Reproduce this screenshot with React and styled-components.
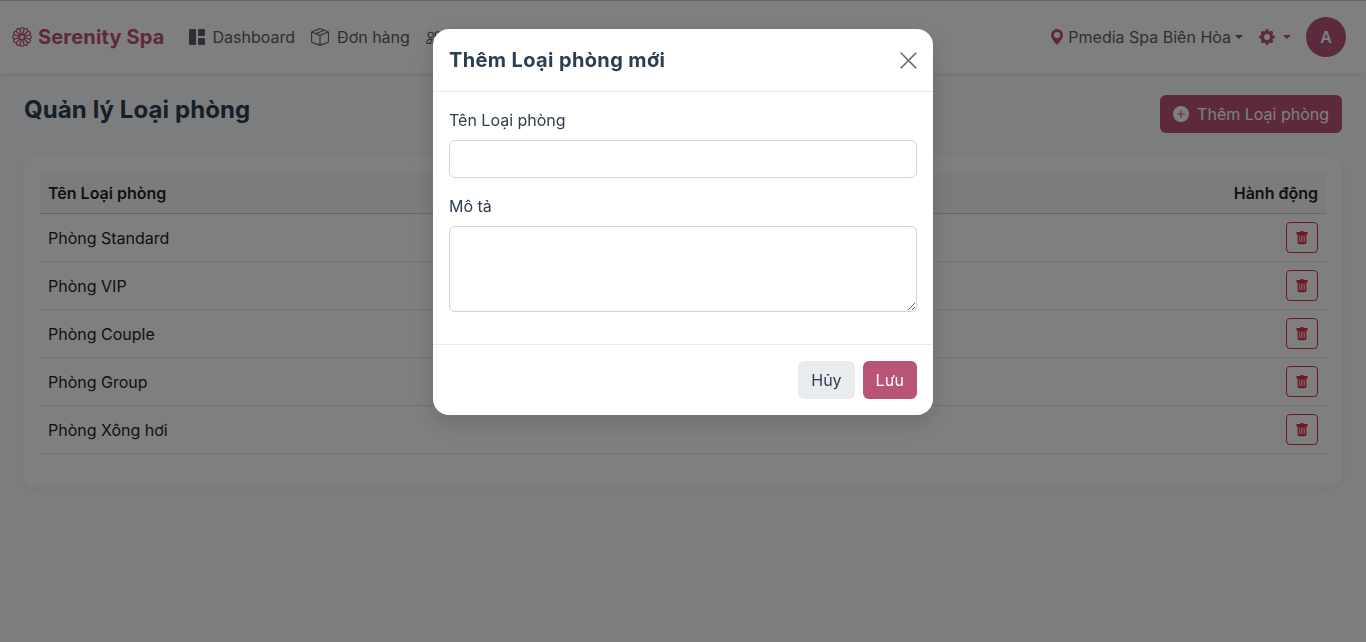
import React from 'react';
import styled, { createGlobalStyle } from 'styled-components';
import { BsFlower1, BsGrid1X2Fill, BsBoxSeam, BsPeople, BsCalendarCheck, BsGeoAltFill, BsGearFill, BsPlusCircleFill, BsTrashFill, BsXLg, BsGrid, BsBarChart } from 'react-icons/bs';

const Global = createGlobalStyle`
  html, body { margin: 0; padding: 0; height: 100%; overflow: hidden; }
  body { font-family: Inter, "Noto Sans", sans-serif; font-size: 16px; line-height: 1.5; color: #212529; background: #f8faff; }
  * { box-sizing: border-box; }
`;
const heading = `"Inter", "Noto Sans", sans-serif`;
const pink = '#b85478';

const Page = styled.div`min-height: 642px;`;
const Nav = styled.nav`
  height: 73px; background: #fff; border-top: 1px solid #ccc;
  box-shadow: 0 2px 4px rgba(0,0,0,.06);
  display: flex; align-items: center; padding: 0 20px 0 12px;
`;
const Brand = styled.div`
  display: flex; align-items: center; gap: 6px; color: ${pink};
  font-family: ${heading}; font-weight: 700; font-size: 20px; letter-spacing: 0.17px; margin-right: 24px; white-space: nowrap;
`;
const NavList = styled.div`display: flex; align-items: center; gap: 16px; flex: 1;`;
const NavItem = styled.a`
  display: flex; align-items: center; gap: 8px; white-space: nowrap; color: #5a6068; font-size: 16px;
  svg { flex: none; }
`;
const Caret = styled.span`
  display: block; flex: none; margin-left: ${p => p.$gap || 4}px; width: 0; height: 0;
  border-top: 4.2px solid currentColor;
  border-left: 4.2px solid transparent; border-right: 4.2px solid transparent;
`;
const Right = styled.div`display: flex; align-items: center;`;
const Branch = styled.div`
  display: flex; align-items: center; color: #5a6068; font-size: 16px; margin-right: 16px; white-space: nowrap;
  svg { color: ${pink}; margin-right: 3px; }
`;
const Gear = styled.div`display: flex; align-items: center; color: ${pink}; margin-right: 15px;`;
const Avatar = styled.div`
  width: 40px; height: 40px; border-radius: 50%; background: ${pink}; color: #fff;
  display: flex; align-items: center; justify-content: center; font-weight: 600; font-size: 16px;
`;
const Main = styled.main`padding: 22px 24px 0;`;
const TitleRow = styled.div`display: flex; justify-content: space-between; align-items: flex-start; margin-bottom: 24px;`;
const Title = styled.h1`
  margin: 0; font-family: ${heading}; font-weight: 700; font-size: 24px; line-height: 30px; color: #2c3e50; letter-spacing: 0.1px;
`;
const AddButton = styled.button`
  height: 38px; padding: 0 13px; border: 0; border-radius: 6px; background: ${pink}; color: #fff;
  font: 400 16px Inter, sans-serif; display: flex; align-items: center; gap: 8px; white-space: nowrap;
`;
const Card = styled.section`
  background: #fff; border-radius: 12px; padding: 16px; height: 330px;
  box-shadow: 0 2px 8px rgba(0,0,0,.04);
`;
const Table = styled.table`width: 100%; border-collapse: separate; border-spacing: 0;`;
const Th = styled.th`
  height: 41px; padding: 0 8px; font-weight: 600; font-size: 16px; background: #f8f9fa; border-bottom: 1px solid #cfd3d6; color: #212529;
  text-align: ${p => p.$right ? 'right' : 'left'};
`;
const Td = styled.td`
  height: 48px; padding: 0 8px; border-bottom: 1px solid #dee2e6; color: #212529; font-size: 16px;
  text-align: ${p => p.$right ? 'right' : 'left'};
`;
const TrashButton = styled.button`
  width: 32px; height: 31px; padding: 0; margin-left: auto; background: transparent; border: 1px solid #dc3545; border-radius: 4px; color: #dc3545;
  display: flex; align-items: center; justify-content: center;
`;
const Backdrop = styled.div`position: fixed; inset: 0; background: rgba(0,0,0,.5);`;
const Modal = styled.div`
  position: fixed; left: 433px; top: 29px; width: 500px; background: #fff; border-radius: 16px;
  box-shadow: 0 8px 24px rgba(0,0,0,.15); color: #2c3e50;
`;
const ModalHeader = styled.header`
  height: 63px; padding: 0 16px; border-bottom: 1px solid #e9ecef; display: flex; align-items: center; justify-content: space-between;
`;
const ModalTitle = styled.h5`margin: 0; font-family: ${heading}; font-weight: 700; font-size: 20px; letter-spacing: 0.37px; color: #2c3e50;`;
const Close = styled.button`border: 0; background: none; padding: 0; color: #6c6f72; display: flex; margin-right: -2px;`;
const ModalBody = styled.div`padding: 16px 16px 32px; display: flex; flex-direction: column;`;
const Label = styled.label`display: block; font-size: 16px; line-height: 24px; margin-bottom: 8px; color: #2c3e50;`;
const Input = styled.input`
  display: block; width: 100%; height: 38px; border: 1px solid #ced4da; border-radius: 6px; margin-bottom: 16px; background: #fff;
`;
const Textarea = styled.textarea`
  display: block; width: 100%; height: 86px; border: 1px solid #ced4da; border-radius: 6px; background: #fff; resize: vertical;
`;
const ModalFooter = styled.footer`
  height: 71px; border-top: 1px solid #e9ecef; padding: 0 16px; display: flex; align-items: center; justify-content: flex-end; gap: 8px;
`;
const FootButton = styled.button`
  height: 38px; padding: 0 13px; border: 0; border-radius: 6px; font: 400 16px Inter, sans-serif;
  background: ${p => p.$primary ? pink : '#e9ecef'}; color: ${p => p.$primary ? '#fff' : '#2c3e50'};
`;

const rooms = ['Phòng Standard', 'Phòng VIP', 'Phòng Couple', 'Phòng Group', 'Phòng Xông hơi'];

export default function App() {
  return (
    <Page>
      <Global />
      <Nav>
        <Brand><BsFlower1 size={20} />Serenity Spa</Brand>
        <NavList>
          <NavItem><BsGrid1X2Fill size={16} />Dashboard</NavItem>
          <NavItem><BsBoxSeam size={18} />Đơn hàng</NavItem>
          <NavItem><BsPeople size={17} />Khách hàng</NavItem>
          <NavItem><BsCalendarCheck size={16} />Lịch hẹn</NavItem>
          <NavItem><BsBarChart size={16} />Báo cáo</NavItem>
          <NavItem><BsGrid size={16} />Quản lý<Caret /></NavItem>
        </NavList>
        <Right>
          <Branch><BsGeoAltFill size={16} />Pmedia Spa Biên Hòa<Caret /></Branch>
          <Gear><BsGearFill size={16} /><Caret $gap={8} /></Gear>
          <Avatar>A</Avatar>
        </Right>
      </Nav>
      <Main>
        <TitleRow>
          <Title>Quản lý Loại phòng</Title>
          <AddButton><BsPlusCircleFill size={16} />Thêm Loại phòng</AddButton>
        </TitleRow>
        <Card>
          <Table>
            <thead><tr><Th>Tên Loại phòng</Th><Th $right>Hành động</Th></tr></thead>
            <tbody>
              {rooms.map(r => (
                <tr key={r}>
                  <Td>{r}</Td>
                  <Td $right><TrashButton aria-label="Xóa"><BsTrashFill size={14} /></TrashButton></Td>
                </tr>
              ))}
            </tbody>
          </Table>
        </Card>
      </Main>
      <Backdrop />
      <Modal>
        <ModalHeader>
          <ModalTitle>Thêm Loại phòng mới</ModalTitle>
          <Close aria-label="Đóng"><BsXLg size={21} strokeWidth={0.3} stroke="currentColor" /></Close>
        </ModalHeader>
        <ModalBody>
          <Label>Tên Loại phòng</Label>
          <Input />
          <Label>Mô tả</Label>
          <Textarea />
        </ModalBody>
        <ModalFooter>
          <FootButton>Hủy</FootButton>
          <FootButton $primary>Lưu</FootButton>
        </ModalFooter>
      </Modal>
    </Page>
  );
}
